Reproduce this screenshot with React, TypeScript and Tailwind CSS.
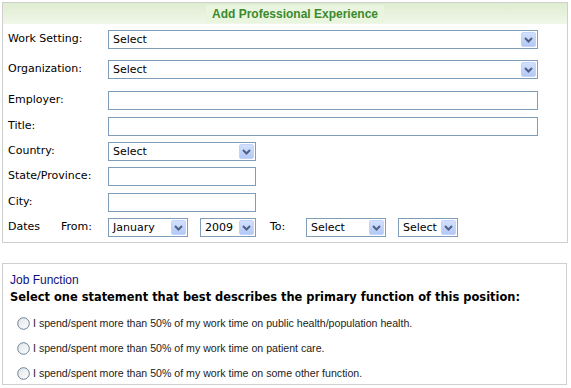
import React from 'react';

const labelFont = "font-['DejaVu_Sans',Verdana,sans-serif] text-[11px] text-black";

function Arrow() {
  return (
    <span className="flex h-[15px] w-[15px] shrink-0 items-center justify-center rounded-[2px] border border-[#c2d3fc] bg-gradient-to-b from-[#d3e0fd] to-[#b3c8f6]">
      <svg width="9" height="6" viewBox="0 0 9 6">
        <polyline points="1,1 4.5,4.5 8,1" fill="none" stroke="#4d6185" strokeWidth="2" />
      </svg>
    </span>
  );
}

function Select({ value, w }: { value: string; w: string }) {
  return (
    <div className={`${w} flex h-[19px] shrink-0 items-center border border-[#7f9db9] bg-white pl-[4px] pr-[1px]`}>
      <span className={`${labelFont} flex-1 leading-none`}>{value}</span>
      <Arrow />
    </div>
  );
}

function TextBox({ w }: { w: string }) {
  return <div className={`${w} h-[19px] shrink-0 border border-[#7f9db9] bg-white`} />;
}

function Row({ label, mt, children }: { label: string; mt: string; children: React.ReactNode }) {
  return (
    <div className={`${mt} flex h-[19px] items-center`}>
      <span className={`${labelFont} w-[105px] shrink-0 pl-[5px]`}>{label}</span>
      {children}
    </div>
  );
}

function Radio({ text }: { text: string }) {
  return (
    <div className="flex h-[13px] items-center">
      <svg width="13" height="13" viewBox="0 0 13 13" className="shrink-0">
        <defs>
          <linearGradient id="rg" x1="0" y1="0" x2="1" y2="1">
            <stop offset="0" stopColor="#dfe3e7" />
            <stop offset="1" stopColor="#ffffff" />
          </linearGradient>
        </defs>
        <circle cx="6.5" cy="6.5" r="5.8" fill="url(#rg)" stroke="#6b7f95" strokeWidth="1" />
      </svg>
      <span className="ml-[3px] whitespace-nowrap font-['Liberation_Sans',Arial,sans-serif] text-[10.6px] text-[#222]">
        {text}
      </span>
    </div>
  );
}

export default function App() {
  return (
    <div className="h-[388px] w-[571px] bg-white pl-[2px] pt-[2px]">
      <div className="w-[566px] border border-[#cfcfcf] pb-[5px]">
        <div className="flex h-[21px] items-center justify-center bg-gradient-to-b from-[#deedd0] to-[#f0f7e9] pl-[20px]">
          <span className="bg-[#eaf5e0] px-[6px] font-['Liberation_Sans',Arial,sans-serif] text-[12px] font-bold text-[#3a8a2c]">
            Add Professional Experience
          </span>
        </div>
        <Row label="Work Setting:" mt="mt-[6px]">
          <Select value="Select" w="w-[430px]" />
        </Row>
        <Row label="Organization:" mt="mt-[11px]">
          <Select value="Select" w="w-[430px]" />
        </Row>
        <Row label="Employer:" mt="mt-[12px]">
          <TextBox w="w-[430px]" />
        </Row>
        <Row label="Title:" mt="mt-[7px]">
          <TextBox w="w-[430px]" />
        </Row>
        <Row label="Country:" mt="mt-[6px]">
          <Select value="Select" w="w-[148px]" />
        </Row>
        <Row label="State/Province:" mt="mt-[6px]">
          <TextBox w="w-[148px]" />
        </Row>
        <Row label="City:" mt="mt-[7px]">
          <TextBox w="w-[148px]" />
        </Row>
        <div className="mt-[6px] flex h-[19px] items-center">
          <span className={`${labelFont} w-[58px] shrink-0 pl-[5px]`}>Dates</span>
          <span className={`${labelFont} w-[47px] shrink-0`}>From:</span>
          <Select value="January" w="w-[80px]" />
          <div className="w-[12px]" />
          <Select value="2009" w="w-[56px]" />
          <span className={`${labelFont} w-[50px] shrink-0 pl-[14px]`}>To:</span>
          <Select value="Select" w="w-[80px]" />
          <div className="w-[12px]" />
          <Select value="Select" w="w-[60px]" />
        </div>
      </div>

      <div className="mt-[20px] h-[122px] w-[565px] border border-[#cfcfcf] pl-[7px] pt-[8px]">
        <div className="font-['Liberation_Sans',Arial,sans-serif] text-[12px] leading-[16px] text-[#10107a]">
          Job Function
        </div>
        <div className="mt-[1px] whitespace-nowrap font-['DejaVu_Sans',Verdana,sans-serif] text-[11.45px] font-bold leading-[17px] text-black">
          Select one statement that best describes the primary function of this position:
        </div>
        <div className="mt-[11px] flex flex-col gap-[12px] pl-[7px]">
          <Radio text="I spend/spent more than 50% of my work time on public health/population health." />
          <Radio text="I spend/spent more than 50% of my work time on patient care." />
          <Radio text="I spend/spent more than 50% of my work time on some other function." />
        </div>
      </div>
    </div>
  );
}
